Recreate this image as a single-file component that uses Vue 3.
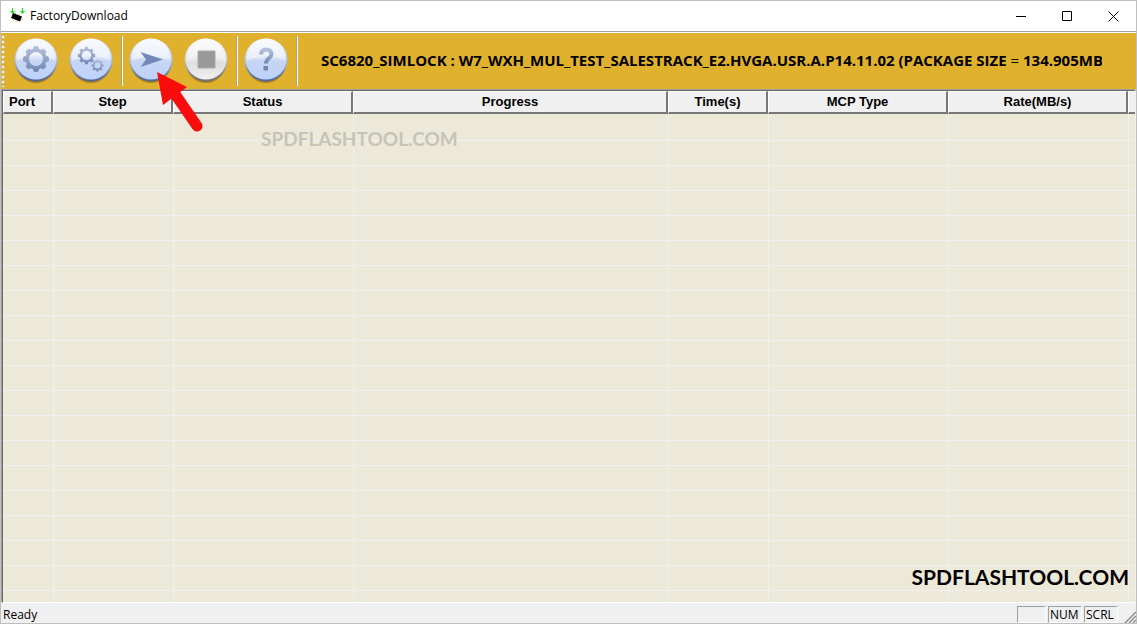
<script setup>
const packageTitle = 'SC6820_SIMLOCK : W7_WXH_MUL_TEST_SALESTRACK_E2.HVGA.USR.A.P14.11.02 (PACKAGE SIZE '
const columns = [
  { name: 'Port', cls: 'port' },
  { name: 'Step', cls: 'step' },
  { name: 'Status', cls: 'wide' },
  { name: 'Progress', cls: 'progress' },
  { name: 'Time(s)', cls: 'time' },
  { name: 'MCP Type', cls: 'wide' },
  { name: 'Rate(MB/s)', cls: 'wide' },
  { name: '', cls: 'rest' },
]
const tools = [
  { id: 'settings', label: 'Load packet' },
  { id: 'gears', label: 'Settings', end: true },
  { id: 'start', label: 'Start downloading' },
  { id: 'stop', label: 'Stop downloading', end: true },
  { id: 'help', label: 'About', end: true },
]

function gear(cx, cy, outer, root, hole, teeth) {
  const step = (Math.PI * 2) / teeth
  const at = (r, a) => `${(cx + r * Math.cos(a)).toFixed(2)} ${(cy + r * Math.sin(a)).toFixed(2)}`
  let d = ''
  for (let i = 0; i < teeth; i++) {
    const a = i * step - Math.PI / 2
    d += `${i ? 'L' : 'M'}${at(root, a - step * 0.32)}L${at(outer, a - step * 0.2)}L${at(outer, a + step * 0.2)}L${at(root, a + step * 0.32)}`
  }
  return `${d}ZM${cx - hole} ${cy}a${hole} ${hole} 0 1 0 ${hole * 2} 0a${hole} ${hole} 0 1 0 ${-hole * 2} 0Z`
}
const bigGear = gear(23, 22, 12.5, 10.2, 7.5, 8)
const midGear = gear(18.5, 18.5, 8.8, 7, 4.8, 8)
const smallGear = gear(29.5, 28.5, 6.2, 4.8, 3, 8)
</script>

<template>
  <div class="window">
    <header class="titlebar">
      <svg class="app-icon" width="16" height="16" viewBox="0 0 16 16" aria-hidden="true">
        <path d="M3.500 0v4M13.500 0v4" stroke="#1ee21e" />
        <path d="M1 3h5L3.500 6zM11 3h5L13.500 6z" fill="#1ee21e" />
        <path d="M4 5L13 8.500L11 13.500L2 10z" fill="#000" />
        <path d="M2 8.500h1M4 12.500h1M7 13.500h1M6 5.500h1M10 6.500h1M13 11.500h1" stroke="#e4d33a" />
      </svg>
      <h1>FactoryDownload</h1>
      <div class="controls">
        <button type="button" aria-label="Minimize"><svg width="11" height="11" viewBox="0 0 11 11"><path d="M0 5.500h10" stroke="#000" /></svg></button>
        <button type="button" aria-label="Maximize"><svg width="11" height="11" viewBox="0 0 11 11"><path d="M.5.500h9v9h-9z" fill="none" stroke="#000" /></svg></button>
        <button type="button" aria-label="Close"><svg width="11" height="11" viewBox="0 0 11 11"><path d="M.5.500l10 10M10.500.500l-10 10" stroke="#000" /></svg></button>
      </div>
    </header>

    <div class="toolbar">
      <svg width="0" height="0" class="defs" aria-hidden="true">
        <defs>
          <linearGradient id="blue" x1="0" y1="0" x2="0" y2="1">
            <stop offset="0" stop-color="#f7f9fd" /><stop offset=".45" stop-color="#e0e8f8" />
            <stop offset=".55" stop-color="#c6d5f3" /><stop offset="1" stop-color="#bdd3fb" />
          </linearGradient>
          <linearGradient id="grey" x1="0" y1="0" x2="0" y2="1">
            <stop offset="0" stop-color="#fbfbfb" /><stop offset=".5" stop-color="#e8e8e8" />
            <stop offset=".6" stop-color="#dedede" /><stop offset="1" stop-color="#f1f1f1" />
          </linearGradient>
          <linearGradient id="rimBlue" x1="0" y1="0" x2="0" y2="1">
            <stop offset="0" stop-color="#d3dcee" /><stop offset=".5" stop-color="#a9bce2" /><stop offset="1" stop-color="#4c6192" />
          </linearGradient>
          <linearGradient id="rimGrey" x1="0" y1="0" x2="0" y2="1">
            <stop offset="0" stop-color="#e4e4e4" /><stop offset=".5" stop-color="#c4c4c4" /><stop offset="1" stop-color="#6c6c6c" />
          </linearGradient>
          <linearGradient id="glyph" x1="0" y1="0" x2="0" y2="1">
            <stop offset="0" stop-color="#b5c0da" /><stop offset="1" stop-color="#7186b6" />
          </linearGradient>
        </defs>
      </svg>
      <span class="grip"></span>
      <template v-for="t in tools" :key="t.id">
        <button type="button" class="tool" :aria-label="t.label" :disabled="t.id === 'stop'">
          <svg width="46" height="48" viewBox="0 0 46 48">
            <ellipse cx="23" cy="25" rx="20.500" ry="21" fill="#8b691d" opacity=".65" />
            <circle cx="23" cy="23" r="21.500" :fill="t.id === 'stop' ? 'url(#rimGrey)' : 'url(#rimBlue)'" />
            <circle cx="23" cy="22" r="20.500" :fill="t.id === 'stop' ? 'url(#grey)' : 'url(#blue)'" />
            <path d="M4 24C4 9 13 3 23 3s19 6 19 21Q23 14 4 24z" fill="#fff" opacity=".35" />
            <path v-if="t.id === 'settings'" :d="bigGear" fill="url(#glyph)" fill-rule="evenodd" stroke="url(#glyph)" stroke-linejoin="round" />
            <g v-else-if="t.id === 'gears'" fill="url(#glyph)" fill-rule="evenodd">
              <path :d="midGear" /><path :d="smallGear" />
            </g>
            <path v-else-if="t.id === 'start'" d="M12.500 15L35 22.500L12.500 30L18 22.500z" fill="#7488b9" />
            <path v-else-if="t.id === 'stop'" d="M15 14h17v17H15z" fill="#999" stroke="#aaa" />
            <g v-else>
              <path d="M18 17.500C18 10.500 28.500 11 28.500 17C28.500 21.500 23 21 23 26.500" fill="none" stroke="url(#glyph)" stroke-width="4" />
              <path d="M20.500 29H25v4.500h-4.500z" fill="#7186b6" />
            </g>
          </svg>
        </button>
        <span v-if="t.end" class="separator"></span>
      </template>
      <p class="package">{{ packageTitle }}<span class="equals">=</span> 134.905MB)</p>
    </div>

    <main class="list">
      <table>
        <colgroup><col v-for="(c, i) in columns" :key="i" :class="c.cls"></colgroup>
        <thead>
          <tr><th v-for="(c, i) in columns" :key="i" scope="col">{{ c.name }}</th></tr>
        </thead>
        <tbody>
          <tr v-for="r in 20" :key="r"><td v-for="(c, i) in columns" :key="i"></td></tr>
        </tbody>
      </table>
      <span class="mark faint">SPDFLASHTOOL.COM</span>
      <span class="mark strong">SPDFLASHTOOL.COM</span>
    </main>

    <footer class="statusbar">
      <span class="ready">Ready</span>
      <span class="pane empty"></span>
      <span class="pane">NUM</span>
      <span class="pane">SCRL</span>
      <svg class="resize" width="12" height="12" viewBox="0 0 12 12" aria-hidden="true">
        <path d="M1 12L12 1M5 12L12 5M9 12L12 9" stroke="#8f8f8f" stroke-width="1.500" />
      </svg>
    </footer>

    <svg class="pointer" width="50" height="64" viewBox="0 0 50 64" aria-hidden="true">
      <path d="M20 24L42 56" stroke="#f80c0c" stroke-width="11" stroke-linecap="round" />
      <path d="M2 2L32 17L8 35z" fill="#f80c0c" />
    </svg>
  </div>
</template>

<style>
body { margin: 0; }
</style>

<style scoped>
.window {
  position: relative;
  box-sizing: border-box;
  height: 100vh;
  display: flex;
  flex-direction: column;
  overflow: hidden;
  border: 1px solid #bfbfbf;
  background: #f0f0f0;
  color: #000;
  font-family: "Open Sans", "Noto Sans", sans-serif;
  font-size: 12px;
}
button { border: 0; padding: 0; background: none; display: grid; place-items: center; }
svg { display: block; }
.titlebar {
  flex: none;
  display: flex;
  align-items: center;
  height: 30px;
  padding-left: 8px;
  background: #fff;
  border-bottom: 1px solid #a0a0a0;
}
h1 { margin: 0 0 0 5px; font-size: 12px; line-height: 16px; font-weight: 400; }
.controls { display: flex; margin-left: auto; }
.controls button { width: 46px; height: 28px; }
.toolbar {
  flex: none;
  display: flex;
  align-items: center;
  height: 56px;
  padding-bottom: 1px;
  border-top: 1px solid #fff;
  background: #e0b12c;
}
.defs { position: absolute; }
.grip {
  width: 4px;
  height: 52px;
  margin-right: 8px;
  background: radial-gradient(circle at 2px 2px, #fbf0cd 1px, #b99a4a 2px, transparent 2px) 0 0 / 4px 5px;
}
.tool { margin-right: 9px; }
.tool:has(+ .separator) { margin-right: 7px; }
.separator {
  box-sizing: border-box;
  width: 2px;
  height: 50px;
  margin-right: 5px;
  border-left: 1px solid #a9a18c;
  border-right: 1px solid #fff;
}
.package {
  flex: 1;
  margin: 0 34px 2px 18px;
  overflow: hidden;
  white-space: nowrap;
  font-size: 15px;
  line-height: 20px;
  font-weight: 700;
}
.equals { font-weight: 400; }
.list {
  position: relative;
  flex: 1;
  min-height: 0;
  overflow: hidden;
  margin: 0 1px;
  border-top: 1px solid #696969;
  border-left: 1px solid #696969;
  border-bottom: 1px solid #fff;
  box-shadow: -1px -1px 0 #a0a0a0;
  background: #ece9d8;
}
table { width: 100%; table-layout: fixed; border-collapse: separate; border-spacing: 0; }
.port { width: 50px; }
.step { width: 120px; }
.wide { width: 180px; }
.progress { width: 315px; }
.time { width: 100px; }
th {
  box-sizing: border-box;
  height: 23px;
  padding: 0;
  background: #f0f0f0;
  border: solid;
  border-width: 1px 2px 2px 1px;
  border-color: #fff #777 #777 #fff;
  font: 700 13px/18px "Liberation Sans", Arial, sans-serif;
}
th:first-child { text-align: left; padding-left: 5px; }
th:last-child { border-right: 0; }
td { box-sizing: border-box; height: 25px; padding: 0; border-bottom: 1px solid #f0f0f0; border-left: 1px solid #f0f0f0; }
td:first-child { border-left: 0; }
tbody tr:first-child td { height: 27px; }
.mark { position: absolute; font-family: Lato, "Open Sans", sans-serif; font-weight: 700; white-space: nowrap; }
.faint { left: 258px; top: 36px; font-size: 19px; line-height: 24px; color: #c6c4b7; }
.strong { right: 6px; bottom: 11px; font-size: 21px; line-height: 28px; }
.statusbar {
  flex: none;
  display: flex;
  align-items: flex-end;
  gap: 2px;
  height: 20px;
}
.ready { margin: 0 auto 0 2px; line-height: 17px; }
.pane {
  box-sizing: border-box;
  height: 17px;
  width: 34px;
  border: 1px solid;
  border-color: #a0a0a0 #fff #fff #a0a0a0;
  padding-left: 1px;
  line-height: 16px;
}
.empty { width: 29px; }
.resize { margin-left: 4px; }
.pointer { position: absolute; left: 154px; top: 69px; pointer-events: none; }
</style>
